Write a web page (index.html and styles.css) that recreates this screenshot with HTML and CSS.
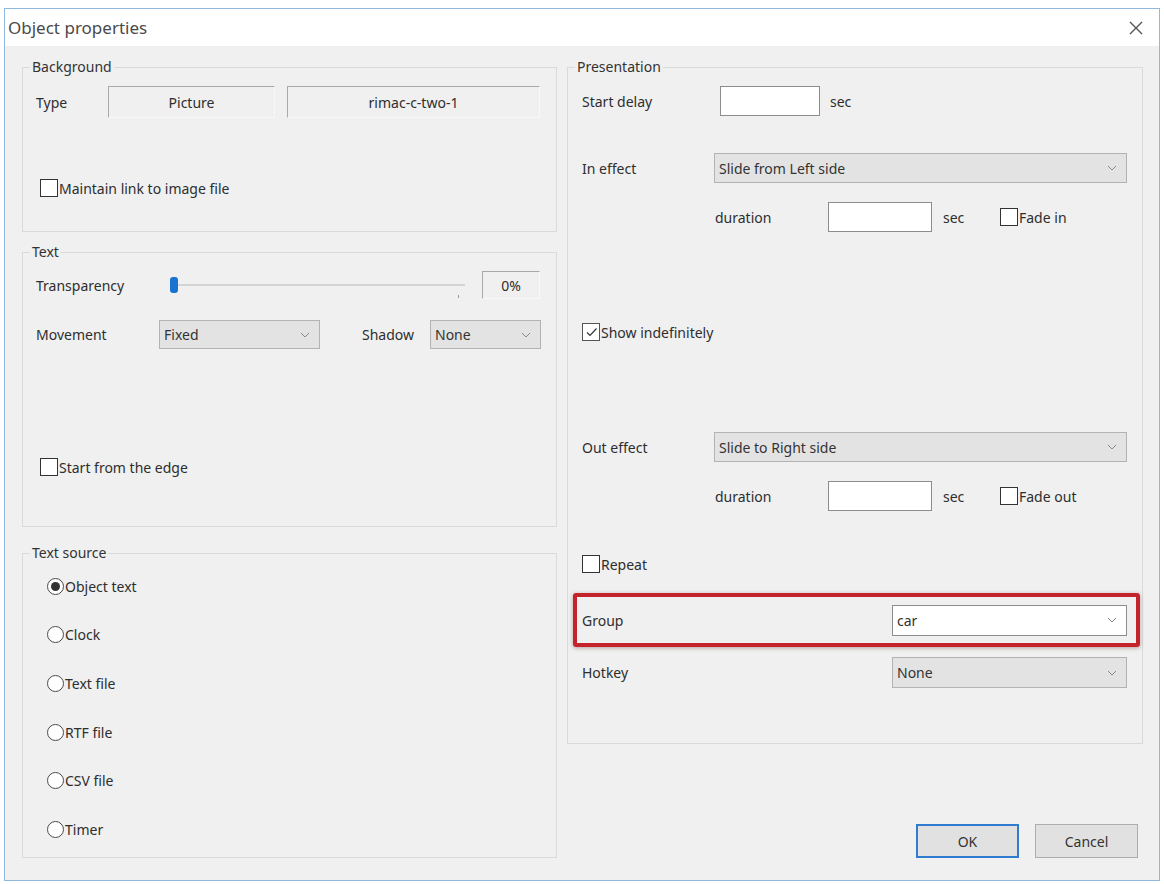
FILE: index.html
```html
<!DOCTYPE html>
<html>
<head>
<meta charset="utf-8">
<title>Object properties</title>
<link rel="stylesheet" href="styles.css">
</head>
<body>
<div class="window">
	<div class="titlebar">
		<span class="title">Object properties</span>
		<svg class="close" width="14" height="14" viewBox="0 0 14 14"><path d="M1 1L13 13M13 1L1 13" stroke="#555" stroke-width="1.4" fill="none"/></svg>
	</div>
	<div class="dialog-body">
		<div class="col-left">
			<fieldset class="group bg-group">
				<legend>Background</legend>
				<div class="row type-row">
					<span class="lbl lbl-type">Type</span>
					<span class="static static-pic">Picture</span>
					<span class="static static-name">rimac-c-two-1</span>
				</div>
				<label class="row check-row link-row"><span class="checkbox"></span>Maintain link to image file</label>
			</fieldset>

			<fieldset class="group text-group">
				<legend>Text</legend>
				<div class="row transp-row">
					<span class="lbl lbl-transp">Transparency</span>
					<div class="slider">
						<span class="track"></span>
						<span class="thumb"></span>
						<span class="tick"></span>
					</div>
					<span class="static static-val">0%</span>
				</div>
				<div class="row move-row">
					<span class="lbl lbl-move">Movement</span>
					<div class="combo combo-move"><span>Fixed</span><svg width="10" height="6" viewBox="0 0 10 6"><path d="M1 1L5 5L9 1" stroke="#888" fill="none"/></svg></div>
					<span class="lbl lbl-shadow">Shadow</span>
					<div class="combo combo-shadow"><span>None</span><svg width="10" height="6" viewBox="0 0 10 6"><path d="M1 1L5 5L9 1" stroke="#888" fill="none"/></svg></div>
				</div>
				<label class="row check-row edge-row"><span class="checkbox"></span>Start from the edge</label>
			</fieldset>

			<fieldset class="group source-group">
				<legend>Text source</legend>
				<div class="radio-list">
					<label class="radio-row"><span class="radio checked"></span>Object text</label>
					<label class="radio-row"><span class="radio"></span>Clock</label>
					<label class="radio-row"><span class="radio"></span>Text file</label>
					<label class="radio-row"><span class="radio"></span>RTF file</label>
					<label class="radio-row"><span class="radio"></span>CSV file</label>
					<label class="radio-row"><span class="radio"></span>Timer</label>
				</div>
			</fieldset>
		</div>

		<div class="col-right">
			<fieldset class="group pres-group">
				<legend>Presentation</legend>
				<div class="row delay-row">
					<span class="lbl lbl-wide">Start delay</span>
					<span class="input input-delay"></span>
					<span class="unit">sec</span>
				</div>
				<div class="row effect-row in-row">
					<span class="lbl lbl-wide">In effect</span>
					<div class="combo combo-effect"><span>Slide from Left side</span><svg width="10" height="6" viewBox="0 0 10 6"><path d="M1 1L5 5L9 1" stroke="#888" fill="none"/></svg></div>
				</div>
				<div class="row dur-row">
					<span class="lbl lbl-dur">duration</span>
					<span class="input input-dur"></span>
					<span class="unit unit-dur">sec</span>
					<label class="check-inline"><span class="checkbox"></span>Fade in</label>
				</div>
				<label class="row check-row show-row"><span class="checkbox checked"><svg width="15" height="15" viewBox="0 0 15 15"><path d="M3 7.5L6 10.5L12.5 3.5" stroke="#333" stroke-width="1.2" fill="none"/></svg></span>Show indefinitely</label>
				<div class="row effect-row out-row">
					<span class="lbl lbl-wide">Out effect</span>
					<div class="combo combo-effect"><span>Slide to Right side</span><svg width="10" height="6" viewBox="0 0 10 6"><path d="M1 1L5 5L9 1" stroke="#888" fill="none"/></svg></div>
				</div>
				<div class="row dur-row">
					<span class="lbl lbl-dur">duration</span>
					<span class="input input-dur"></span>
					<span class="unit unit-dur">sec</span>
					<label class="check-inline"><span class="checkbox"></span>Fade out</label>
				</div>
				<label class="row check-row repeat-row"><span class="checkbox"></span>Repeat</label>
				<div class="highlight">
					<div class="row group-row">
						<span class="lbl lbl-group">Group</span>
						<div class="combo combo-right combo-white"><span>car</span><svg width="10" height="6" viewBox="0 0 10 6"><path d="M1 1L5 5L9 1" stroke="#888" fill="none"/></svg></div>
					</div>
				</div>
				<div class="row hotkey-row">
					<span class="lbl lbl-group">Hotkey</span>
					<div class="combo combo-right"><span>None</span><svg width="10" height="6" viewBox="0 0 10 6"><path d="M1 1L5 5L9 1" stroke="#888" fill="none"/></svg></div>
				</div>
			</fieldset>
			<div class="buttons">
				<button class="btn btn-default">OK</button>
				<button class="btn">Cancel</button>
			</div>
		</div>
	</div>
</div>
</body>
</html>
```

FILE: styles.css
```css
* {
	box-sizing: border-box;
}
body {
	margin: 0;
	background: #fff;
	font-family: "Noto Sans", "Liberation Sans", sans-serif;
	font-size: 14px;
	color: #2e2e2e;
}
.window {
	margin: 8px 0 0 4px;
	width: 1156px;
	height: 873px;
	border: 1px solid #8fb9df;
	background: #f0f0f0;
	display: flex;
	flex-direction: column;
}
.titlebar {
	height: 37px;
	background: #fff;
	display: flex;
	align-items: center;
	justify-content: space-between;
	padding: 0 16px 0 3px;
}
.title {
	font-size: 17px;
	color: #4a4a4a;
}
.dialog-body {
	flex: 1;
	display: flex;
	gap: 10px;
	padding: 12px 16px 0 17px;
}
.col-left {
	width: 535px;
	display: flex;
	flex-direction: column;
}
.col-right {
	width: 576px;
	display: flex;
	flex-direction: column;
}

/* group boxes */
.group {
	margin: 0;
	padding: 0;
	border: 1px solid #dadada;
	min-width: 0;
}
.group legend {
	padding: 0 2px;
	line-height: 18px;
	font-size: 14px;
	color: #333;
}
.bg-group {
	height: 174px;
	padding-left: 13px;
}
.text-group {
	height: 284px;
	margin-top: 11px;
	padding-left: 13px;
}
.bg-group legend,
.text-group legend {
	margin-left: -6px;
}
.source-group {
	height: 314px;
	margin-top: 17px;
	padding-left: 24px;
}
.source-group legend {
	margin-left: -17px;
}
.pres-group {
	height: 686px;
	padding: 0 15px 0 14px;
}
.pres-group legend {
	margin-left: -7px;
}

.row {
	display: flex;
	align-items: center;
}
.lbl {
	flex: none;
}

/* static (sunken) fields */
.static {
	height: 32px;
	display: flex;
	align-items: center;
	justify-content: center;
	border-top: 1px solid #a9a9a9;
	border-left: 1px solid #a9a9a9;
	border-right: 1px solid #f8f8f8;
	border-bottom: 1px solid #f8f8f8;
}

/* background group */
.type-row {
	margin-top: 10px;
	height: 32px;
}
.lbl-type {
	width: 72px;
}
.static-pic {
	width: 167px;
}
.static-name {
	width: 253px;
	margin-left: 12px;
}
.check-row {
	height: 24px;
}
.link-row {
	margin-top: 58px;
	padding-left: 4px;
}

/* checkboxes and radios */
.checkbox {
	flex: none;
	width: 18px;
	height: 18px;
	margin-right: 1px;
	border: 1px solid #333;
	background: #fff;
	display: flex;
	align-items: center;
	justify-content: center;
}
.checkbox.checked {
	border-color: #555;
}
.radio {
	flex: none;
	width: 17px;
	height: 17px;
	margin-right: 1px;
	border: 1.5px solid #4a4a4a;
	border-radius: 50%;
	background: #fff;
	display: flex;
	align-items: center;
	justify-content: center;
}
.radio.checked::after {
	content: "";
	width: 9px;
	height: 9px;
	border-radius: 50%;
	background: #333;
}

/* text group */
.transp-row {
	margin-top: 10px;
	height: 28px;
}
.lbl-transp {
	width: 130px;
}
.slider {
	position: relative;
	width: 304px;
	height: 28px;
}
.track {
	position: absolute;
	left: 9px;
	right: 5px;
	top: 13px;
	height: 2px;
	background: #d4d4d4;
}
.thumb {
	position: absolute;
	left: 4px;
	top: 6px;
	width: 8px;
	height: 16px;
	border-radius: 3px;
	background: #1874d0;
}
.tick {
	position: absolute;
	left: 292px;
	top: 24px;
	width: 1px;
	height: 3px;
	background: #999;
}
.static-val {
	width: 58px;
	height: 28px;
	margin-left: 12px;
}
.move-row {
	margin-top: 21px;
	height: 29px;
}
.lbl-move {
	width: 123px;
}
.lbl-shadow {
	width: 68px;
	margin-left: 42px;
}
.combo {
	flex: none;
	height: 29px;
	display: flex;
	align-items: center;
	justify-content: space-between;
	padding: 0 9px 0 4px;
	background: #e3e3e3;
	border: 1px solid #b3b3b3;
	color: #333;
}
.combo-move {
	width: 161px;
}
.combo-shadow {
	width: 111px;
}
.edge-row {
	margin-top: 106px;
	padding-left: 4px;
}

/* text source */
.radio-list {
	display: grid;
	grid-auto-rows: 48.6px;
	align-items: center;
}
.radio-row {
	display: flex;
	align-items: center;
}

/* presentation */
.lbl-wide {
	width: 132px;
}
.input {
	flex: none;
	height: 30px;
	background: #fff;
	border: 1px solid #8c8c8c;
}
.delay-row {
	margin-top: 10px;
	height: 30px;
}
.input-delay {
	width: 100px;
	margin-left: 6px;
}
.unit {
	margin-left: 10px;
}
.effect-row {
	height: 30px;
}
.in-row {
	margin-top: 37px;
}
.out-row {
	margin-top: 88px;
}
.combo-effect {
	width: 413px;
	height: 30px;
}
.dur-row {
	margin-top: 19px;
	height: 30px;
	padding-left: 133px;
}
.lbl-dur {
	width: 113px;
}
.input-dur {
	width: 104px;
}
.unit-dur {
	width: 57px;
	margin-left: 11px;
}
.check-inline {
	display: flex;
	align-items: center;
}
.show-row {
	margin-top: 88px;
}
.repeat-row {
	margin-top: 41px;
}
.highlight {
	margin: 17px -13px 0 -9px;
	height: 54px;
	padding: 0 9px 0 5px;
	border: 4px solid #c3232b;
	border-radius: 3px;
	box-shadow: 0 1px 4px rgba(80, 0, 0, 0.35);
	display: flex;
	align-items: center;
}
.group-row {
	width: 100%;
	height: 31px;
}
.lbl-group {
	width: 310px;
}
.combo-right {
	width: 235px;
	height: 31px;
}
.combo-white {
	background: #fff;
	border-color: #8c8c8c;
}
.hotkey-row {
	margin-top: 10px;
	height: 31px;
}

/* buttons */
.buttons {
	margin-top: 80px;
	display: flex;
	justify-content: flex-end;
	gap: 16px;
	padding-right: 5px;
}
.btn {
	width: 103px;
	height: 34px;
	font-family: "Noto Sans", "Liberation Sans", sans-serif;
	font-size: 14px;
	color: #333;
	background: #e1e1e1;
	border: 1px solid #adadad;
}
.btn-default {
	border: 2px solid #2f7bd0;
}
```
